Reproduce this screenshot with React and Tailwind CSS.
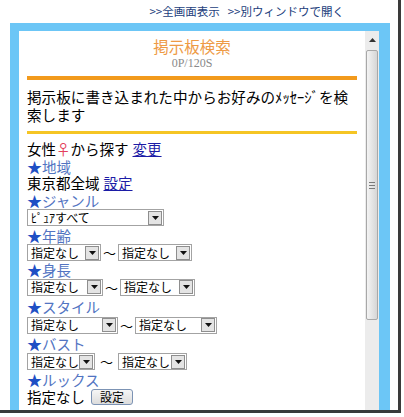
const font = { fontFamily: '"Noto Sans CJK JP", "Noto Sans", sans-serif' }

const Arrow = ({ className = '' }) => (
  <span
    className={`flex items-center justify-center w-[14px] h-[14px] bg-[#e4e4e4] border border-[#8e8e8e] ${className}`}
  >
    <svg width="7" height="4" viewBox="0 0 7 4">
      <path d="M0 0h7L3.5 4z" fill="#111" />
    </svg>
  </span>
)

const Select = ({ label, width }) => (
  <div
    className="flex items-center justify-between h-[17px] border border-[#a3a3a3] bg-white pl-[3px] pr-[1px]"
    style={{ width }}
  >
    <span className="text-[12px] leading-none text-black whitespace-nowrap">{label}</span>
    <Arrow />
  </div>
)

const Label = ({ children }) => (
  <span className="flex items-center h-[17px] text-[14.5px] leading-[17px]">
    <span className="text-[#1f4fc4] text-[15px] leading-[17px]">★</span>
    <span className="text-[#5274c2]">{children}</span>
  </span>
)

const Range = ({ a, b, gap = '' }) => (
  <div className="flex items-center">
    <Select label="指定なし" width={a} />
    <span className={`text-[13px] leading-none text-black ${gap}`}>〜</span>
    <Select label="指定なし" width={b} />
  </div>
)

export default function App() {
  return (
    <div className="w-[404px] h-[417px] bg-white overflow-hidden" style={font}>
      <div className="w-[401px] h-[413px] border-r-[3px] border-b-[3px] border-[#3a3a3a] overflow-hidden">
        <div className="h-[23px] flex items-center justify-end pr-[54px] text-[11.5px] text-[#23407c] gap-[8px] leading-none">
          <span>&gt;&gt;全画面表示</span>
          <span>&gt;&gt;別ウィンドウで開く</span>
        </div>
        <div className="ml-[10px] w-[380px] h-[400px] bg-[#6cc6f6] pt-[8px] pl-[9px] pr-[11px]">
          <div className="flex h-full bg-white">
            <div className="w-[346px] px-[8px]">
              <div className="pt-[7px] h-[18px] box-content flex items-center justify-center text-[15.5px] leading-none text-[#ee9a45]">
                掲示板検索
              </div>
              <div
                className="h-[14px] flex items-center justify-center text-[12px] text-[#8a8a8a] leading-none"
                style={{ fontFamily: '"Liberation Serif", serif' }}
              >
                0P/120S
              </div>
              <div className="mt-[6px] h-[4px] bg-[#f29a1c]" />
              <div className="mt-[8px] text-[14.6px] leading-[18px] text-black">
                掲示板に書き込まれた中からお好みのﾒｯｾｰｼﾞを検索します
              </div>
              <div className="mt-[7px] h-[3px] bg-[#f5c524]" />
              <div className="mt-[6px] text-[14.5px] text-black">
                <div className="h-[18px] flex items-center leading-none">
                  女性<span className="text-[#e4405c]">♀</span>から探す
                  <span className="ml-[4px] text-[#1c1ca6] underline">変更</span>
                </div>
                <div className="h-[17px] flex items-center">
                  <Label>地域</Label>
                </div>
                <div className="h-[17px] flex items-center leading-none">
                  東京都全域<span className="ml-[4px] text-[#1c1ca6] underline">設定</span>
                </div>
                <div className="h-[17px] flex items-center">
                  <Label>ジャンル</Label>
                </div>
                <div className="h-[17px] flex items-center">
                  <Select label="ﾋﾟｭｱすべて" width={137} />
                </div>
                <div className="h-[18px] flex items-center">
                  <Label>年齢</Label>
                </div>
                <div className="h-[17.5px] flex items-center">
                  <Range a={74} b={74} gap="mx-[2px]" />
                </div>
                <div className="h-[16.5px] flex items-center">
                  <Label>身長</Label>
                </div>
                <div className="h-[18.5px] flex items-center">
                  <Range a={76} b={75} gap="mx-[2px]" />
                </div>
                <div className="h-[19.5px] flex items-center">
                  <Label>スタイル</Label>
                </div>
                <div className="h-[18px] flex items-center">
                  <Range a={91} b={82} gap="mx-[2px]" />
                </div>
                <div className="h-[18.5px] flex items-center">
                  <Label>バスト</Label>
                </div>
                <div className="h-[18.5px] flex items-center">
                  <Range a={68} b={69} gap="mx-[5px]" />
                </div>
                <div className="h-[17.5px] flex items-center">
                  <Label>ルックス</Label>
                </div>
                <div className="h-[17px] flex items-center leading-none">
                  指定なし
                  <span className="ml-[6px] h-[16px] w-[42px] flex items-center justify-center text-[12px] rounded-[3px] border border-[#7c93b4] bg-gradient-to-b from-[#f6f6f6] to-[#dcdcdc]">
                    設定
                  </span>
                </div>
              </div>
            </div>
            <div className="w-[14px] bg-[#ececec] flex flex-col items-center">
              <div className="h-[17px] w-full flex items-center justify-center">
                <svg width="7" height="4" viewBox="0 0 7 4">
                  <path d="M0 4h7L3.5 0z" fill="#333" />
                </svg>
              </div>
              <div className="mt-[2px] w-[12px] h-[270px] rounded-[2px] border border-[#a8a8a8] bg-gradient-to-r from-[#f4f4f4] to-[#d6d6d6] flex items-center justify-center">
                <div className="flex flex-col gap-[2px]">
                  <div className="w-[6px] h-[1px] bg-[#7a7a7a]" />
                  <div className="w-[6px] h-[1px] bg-[#7a7a7a]" />
                  <div className="w-[6px] h-[1px] bg-[#7a7a7a]" />
                </div>
              </div>
            </div>
          </div>
        </div>
      </div>
    </div>
  )
}
